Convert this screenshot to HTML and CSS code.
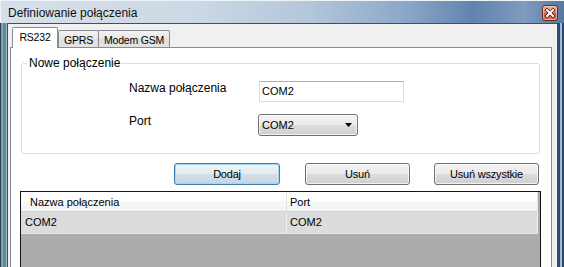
FILE: index.html
```html
<!DOCTYPE html>
<html lang="pl">
<head>
<meta charset="utf-8">
<title>Definiowanie połączenia</title>
<link rel="stylesheet" href="styles.css">
</head>
<body>
<div class="window">
  <div class="titlebar">
    <span class="title">Definiowanie połączenia</span>
    <span class="close">
      <svg width="14" height="14" viewBox="0 0 14 14">
        <path d="M4 4 L10 10 M10 4 L4 10" stroke="#5b1d12" stroke-width="3.6" stroke-linecap="square" fill="none"/>
        <path d="M4 4 L10 10 M10 4 L4 10" stroke="#ffffff" stroke-width="2" stroke-linecap="square" fill="none"/>
      </svg>
    </span>
  </div>
  <div class="body">
    <div class="frame-left"></div>
    <div class="client">
      <div class="tabs">
        <div class="tab active">RS232</div>
        <div class="tab tab-gprs">GPRS</div>
        <div class="tab tab-gsm">Modem GSM</div>
      </div>
      <div class="panel">
        <fieldset class="group">
          <legend>Nowe połączenie</legend>
          <div class="form">
            <span class="label">Nazwa połączenia</span>
            <div class="textbox">COM2</div>
            <span class="label">Port</span>
            <div class="combo">
              <span>COM2</span>
              <svg width="7" height="4" viewBox="0 0 7 4"><path d="M0 0 H7 L3.5 4 Z" fill="#000"/></svg>
            </div>
          </div>
        </fieldset>
        <div class="buttons">
          <div class="btn btn-default">Dodaj</div>
          <div class="btn">Usuń</div>
          <div class="btn">Usuń wszystkie</div>
        </div>
        <div class="grid">
          <div class="grid-head">
            <div class="hcell c1">Nazwa połączenia</div>
            <div class="hcell c2">Port</div>
          </div>
          <div class="grid-row">
            <div class="cell c1 first">COM2</div>
            <div class="cell c2">COM2</div>
          </div>
        </div>
      </div>
    </div>
    <div class="frame-right"></div>
  </div>
</div>
</body>
</html>
```
FILE: styles.css
```css
html, body {
  margin: 0;
  padding: 0;
}
body {
  width: 564px;
  height: 267px;
  overflow: hidden;
  font-family: "Liberation Sans", Arial, sans-serif;
  font-size: 11px;
  color: #000;
  background: #6f8fb3;
}
.window {
  width: 564px;
  height: 267px;
  display: flex;
  flex-direction: column;
}
.titlebar {
  height: 23px;
  flex: none;
  box-sizing: border-box;
  display: flex;
  justify-content: space-between;
  align-items: flex-start;
  padding: 6px 6px 0 8px;
  background: linear-gradient(to right, #d6e0ea 0%, #cbd8e5 35%, #b3c6da 55%, #8ba7c8 72%, #6183ad 84%, #7f9bbf 93%, #58789f 100%);
  box-shadow: inset 1px 1px 0 #eef3f8;
}
.title {
  font-size: 12px;
  line-height: 14px;
  color: #111;
}
.close {
  margin-top: -1px;
  width: 16px;
  height: 16px;
  box-sizing: border-box;
  border: 1px solid #6e2a1f;
  border-radius: 3px;
  background: linear-gradient(#eebbaa 0%, #df8c78 45%, #cb5a42 55%, #d97458 100%);
  box-shadow: inset 0 0 0 1px rgba(255, 220, 210, 0.5);
  display: flex;
  align-items: center;
  justify-content: center;
}
.body {
  flex: 1;
  display: flex;
  min-height: 0;
}
.frame-left {
  width: 7px;
  flex: none;
  background: linear-gradient(to right, #2d3b47 0 1px, #7ea2b6 1px 3px, #5f8b92 3px 6px, #9db8c6 6px);
}
.client {
  width: 551px;
  flex: none;
  box-sizing: border-box;
  border: 1px solid #3f5063;
  border-bottom: none;
  background: #f0f0f0;
  display: flex;
  flex-direction: column;
}
.frame-right {
  flex: 1;
  background: linear-gradient(to right, #2f4a70 0 2px, #a7bad0 2px 4px, #2c4870 4px);
}
.tabs {
  height: 23px;
  flex: none;
  display: flex;
  align-items: flex-end;
  padding-left: 4px;
}
.tab {
  box-sizing: border-box;
  height: 17px;
  border: 1px solid #898c95;
  border-bottom: none;
  padding-top: 3px;
  line-height: 13px;
  font-size: 10.5px;
  letter-spacing: -0.2px;
  text-align: center;
  background: linear-gradient(#f3f3f3, #e6e6e6 50%, #dedede 50%, #e3e3e3);
  border-radius: 2px 2px 0 0;
}
.tab.active {
  width: 46px;
  height: 21px;
  margin-bottom: -1px;
  position: relative;
  z-index: 1;
  background: #fff;
}
.tab-gprs {
  width: 41px;
}
.tab-gsm {
  width: 72px;
  margin-left: -1px;
}
.panel {
  flex: 1;
  margin: 0 5px 0 2px;
  border: 1px solid #898c95;
  border-bottom: none;
  background: #fff;
  display: flex;
  flex-direction: column;
  min-height: 0;
}
.group {
  margin: 8px 11px 0 10px;
  padding: 0 0 17px 0;
  border: 1px solid #d5dfe5;
  border-radius: 3px;
  min-width: 0;
}
.group legend {
  font-size: 12px;
  line-height: 14px;
  padding: 0 2px;
  margin-left: 5px;
}
.form {
  display: grid;
  grid-template-columns: 130px 145px;
  row-gap: 12px;
  padding-left: 107px;
  margin-top: 11px;
}
.label {
  font-size: 12px;
  line-height: 14px;
  align-self: start;
}
.textbox {
  box-sizing: border-box;
  height: 21px;
  border: 1px solid #dadde4;
  border-top-color: #abadb3;
  padding-left: 2px;
  line-height: 19px;
  background: #fff;
}
.combo {
  box-sizing: border-box;
  width: 100px;
  height: 22px;
  margin-left: -1px;
  border: 1px solid #707070;
  border-radius: 3px;
  padding: 0 5px 0 3px;
  display: flex;
  align-items: center;
  justify-content: space-between;
  background: linear-gradient(#f2f2f2 0%, #ebebeb 50%, #dddddd 50%, #cfcfcf 100%);
  box-shadow: inset 0 0 0 1px rgba(255, 255, 255, 0.7);
}
.buttons {
  display: flex;
  justify-content: flex-end;
  gap: 24px;
  margin: 9px 12px 0 0;
}
.btn {
  box-sizing: border-box;
  width: 105px;
  height: 22px;
  border: 1px solid #707070;
  border-radius: 3px;
  text-align: center;
  line-height: 20px;
  letter-spacing: -0.2px;
  background: linear-gradient(#f2f2f2 0%, #ebebeb 50%, #dddddd 50%, #cfcfcf 100%);
  box-shadow: inset 0 0 0 1px rgba(255, 255, 255, 0.7);
}
.btn-default {
  width: 106px;
  margin-right: 1px;
  border-color: #3c7fb1;
  background: linear-gradient(#eef3f6 0%, #e4ecf1 50%, #d3dfe7 50%, #c6d6e1 100%);
  box-shadow: inset 0 0 0 1px #9fd8f3;
}
.grid {
  flex: 1;
  width: 521px;
  box-sizing: border-box;
  margin: 6px 0 0 9px;
  border: 1px solid #141414;
  border-bottom: none;
  background: #ababab;
}
.grid-head, .grid-row {
  display: flex;
}
.hcell {
  box-sizing: border-box;
  height: 20px;
  padding-top: 1px;
  line-height: 18px;
  border-right: 1px solid #e3e4e6;
  border-bottom: 1px solid #d5d5d5;
  background: linear-gradient(#ffffff 0%, #ffffff 50%, #f7f8fa 50%, #f2f3f5 100%);
}
.c1 {
  width: 266px;
  padding-left: 9px;
}
.c2 {
  width: 251px;
  padding-left: 3px;
}
.cell {
  box-sizing: border-box;
  height: 22px;
  line-height: 21px;
  background: #dcdcdc;
  border-right: 1px solid #eeeeee;
  border-bottom: 1px solid #e6e6e6;
}
.cell.first {
  padding-left: 4px;
}
```
